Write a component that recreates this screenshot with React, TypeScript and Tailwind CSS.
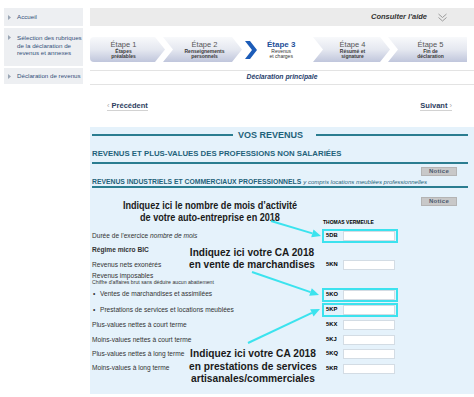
import React from 'react';

type Row = {
  h: string;
  label: React.ReactNode;
  code?: string;
  hl?: boolean;
  kind?: 'bold' | 'tiny' | 'bullet';
};

const rows: Row[] = [
  { h: 'h-[14px]', label: <>Durée de l'exercice <i>nombre de mois</i></>, code: '5DB', hl: true },
  { h: 'h-[14px]', label: 'Régime micro BIC', kind: 'bold' },
  { h: 'h-[16px]', label: 'Revenus nets exonérés', code: '5KN' },
  { h: 'h-[7px]', label: 'Revenus imposables' },
  { h: 'h-[6px]', label: "Chiffre d'affaires brut sans déduire aucun abattement", kind: 'tiny' },
  { h: 'h-[17px]', label: 'Ventes de marchandises et assimilées', code: '5KO', hl: true, kind: 'bullet' },
  { h: 'h-[14px]', label: 'Prestations de services et locations meublées', code: '5KP', hl: true, kind: 'bullet' },
  { h: 'h-[16px]', label: 'Plus-values nettes à court terme', code: '5KX' },
  { h: 'h-[14px]', label: 'Moins-values nettes à court terme', code: '5KJ' },
  { h: 'h-[14px]', label: 'Plus-values nettes à long terme', code: '5KQ' },
  { h: 'h-[15px]', label: 'Moins-values à long terme', code: '5KR' },
];

function Tri() {
  return (
    <svg width="3" height="5" viewBox="0 0 3 5" className="mr-[6px] shrink-0">
      <polygon points="0,0 3,2.5 0,5" fill="#9aa6b5" />
    </svg>
  );
}

function Step({ title, lines, className }: { title: string; lines: string[]; className: string }) {
  return (
    <div
      className={`flex h-[25px] shrink-0 flex-col items-center justify-center bg-linear-to-b from-[#f8f9fb] via-[#e5e8f0] to-[#c0c6dc] ${className}`}
    >
      <span className="text-[7.5px] leading-[8px] text-[#555]">{title}</span>
      {lines.map((l) => (
        <span key={l} className="text-[5px] font-bold leading-[5px] text-[#3a3a3a]">
          {l}
        </span>
      ))}
    </div>
  );
}

function Arrow({ x1, y1, x2, y2 }: { x1: number; y1: number; x2: number; y2: number }) {
  const a = Math.atan2(y2 - y1, x2 - x1);
  const len = 9;
  const half = 4;
  const bx = x2 - len * Math.cos(a);
  const by = y2 - len * Math.sin(a);
  const px = -Math.sin(a) * half;
  const py = Math.cos(a) * half;
  return (
    <g>
      <line x1={x1} y1={y1} x2={bx} y2={by} stroke="#3be3ee" strokeWidth={2} />
      <polygon points={`${x2},${y2} ${bx + px},${by + py} ${bx - px},${by - py}`} fill="#3be3ee" />
    </g>
  );
}

export default function App() {
  return (
    <div className="relative flex h-[397px] w-[474px] overflow-hidden bg-white pt-[8px] font-['Liberation_Sans',Arial,sans-serif]">
      {/* sidebar */}
      <aside className="ml-[4px] flex w-[79px] shrink-0 flex-col gap-[2px] whitespace-nowrap text-[6.2px] leading-[7.5px] text-[#34507a]">
        <div className="flex h-[18px] items-center bg-[#edeff2] pl-[4px]">
          <Tri />
          <span>Accueil</span>
        </div>
        <div className="flex h-[38px] items-start bg-[#edeff2] pl-[4px] pt-[6px]">
          <span className="mt-[1px]">
            <Tri />
          </span>
          <span>
            Sélection des rubriques
            <br />
            de la déclaration de
            <br />
            revenus et annexes
          </span>
        </div>
        <div className="flex h-[16px] items-center bg-[#edeff2] pl-[4px]">
          <Tri />
          <span>Déclaration de revenus</span>
        </div>
      </aside>

      {/* main */}
      <main className="ml-[7px] flex w-[384px] shrink-0 flex-col">
        <div className="flex h-[18px] items-center justify-end bg-[#ebebeb] pr-[27px]">
          <span className="text-[7.5px] font-bold italic text-[#333]">Consulter l'aide</span>
          <svg width="9" height="9" viewBox="0 0 9 9" className="ml-[11px]">
            <polyline points="0.5,1 4.5,4.5 8.5,1" fill="none" stroke="#9a9a9a" strokeWidth="1" />
            <polyline points="0.5,4.5 4.5,8 8.5,4.5" fill="none" stroke="#9a9a9a" strokeWidth="1" />
          </svg>
        </div>

        {/* stepper */}
        <div className="mt-[11px] flex h-[25px]">
          <Step
            title="Étape 1"
            lines={['Étapes', 'préalables']}
            className="w-[75px] rounded-l-[4px] pr-[8px] [clip-path:polygon(0_0,calc(100%_-_10px)_0,100%_50%,calc(100%_-_10px)_100%,0_100%)]"
          />
          <Step
            title="Étape 2"
            lines={['Renseignements', 'personnels']}
            className="-ml-[2px] w-[79px] pl-[4px] [clip-path:polygon(0_0,calc(100%_-_10px)_0,100%_50%,calc(100%_-_10px)_100%,0_100%,10px_50%)]"
          />
          <div className="flex h-[25px] w-[71px] shrink-0 items-center">
            <svg width="12" height="18" viewBox="0 0 12 18" className="ml-[3px]">
              <polygon points="0,0 5,0 12,9 5,18 0,18 7,9" fill="#1c5cb8" />
            </svg>
            <div className="ml-[10px] flex flex-col items-center">
              <span className="text-[8px] font-bold leading-[8px] text-[#1d4f99]">Étape 3</span>
              <span className="text-[5px] leading-[5px] text-[#333]">Revenus</span>
              <span className="text-[5px] leading-[5px] text-[#333]">et charges</span>
            </div>
          </div>
          <Step
            title="Étape 4"
            lines={['Résumé et', 'signature']}
            className="w-[77px] pl-[2px] [clip-path:polygon(0_0,calc(100%_-_10px)_0,100%_50%,calc(100%_-_10px)_100%,0_100%,10px_50%)]"
          />
          <Step
            title="Étape 5"
            lines={['Fin de', 'déclaration']}
            className="-ml-[2px] w-[79px] pl-[6px] [clip-path:polygon(0_0,100%_0,100%_100%,0_100%,10px_50%)]"
          />
        </div>

        <div className="mt-[8px] flex h-[15px] items-center justify-center border-y border-[#e3e3e3]">
          <span className="text-[6.8px] font-bold italic text-[#1f3d6b]">Déclaration principale</span>
        </div>

        <div className="flex h-[42px] items-center justify-between pl-[17px] pr-[22px] text-[7.5px] font-bold text-[#2d4060]">
          <span className="border-b border-[#d2d2d2] leading-[9px]">
            <span className="font-normal text-[#aaa]">‹ </span>Précédent
          </span>
          <span className="border-b border-[#d2d2d2] leading-[9px]">
            Suivant<span className="font-normal text-[#aaa]"> ›</span>
          </span>
        </div>

        {/* panel */}
        <section className="flex flex-col bg-[#e5f2fb] pb-[18px] pl-[2px] pr-[6px]">
          <div className="mt-[3px] flex h-[10px] items-center">
            <div className="h-[1.5px] w-[141px] bg-[#2b7d90]" />
            <span className="ml-[5px] mr-[13px] text-[9px] font-bold leading-none text-[#1f627a]">VOS REVENUS</span>
            <div className="h-[1.5px] flex-1 bg-[#2b7d90]" />
          </div>

          <div className="flex h-[24px] items-end border-b-2 border-[#2b7d90] pb-[4px] text-[7.8px] font-bold leading-[9px] text-[#1f627a]">
            REVENUS ET PLUS-VALUES DES PROFESSIONS NON SALARIÉES
          </div>

          <div className="mr-[11px] mt-[3px] flex h-[9px] w-[36px] items-center justify-center self-end border border-[#b4b4b4] bg-[#c8c8c8] text-[6px] font-bold tracking-[0.3px] text-[#4c5b70]">
            Notice
          </div>

          <div className="flex h-[12px] items-end border-b-2 border-[#2b7d90] leading-[8px] text-[#1f627a]">
            <span className="text-[6.8px] font-bold">REVENUS INDUSTRIELS ET COMMERCIAUX PROFESSIONNELS</span>
            <span className="ml-[2px] text-[6px] italic">y compris locations meublées professionnelles</span>
          </div>

          <div className="mr-[11px] mt-[9px] flex h-[9px] w-[36px] items-center justify-center self-end border border-[#b4b4b4] bg-[#c8c8c8] text-[6px] font-bold tracking-[0.3px] text-[#4c5b70]">
            Notice
          </div>

          <div className="flex h-[23px] items-end pb-[4px]">
            <span className="ml-[231px] text-[5px] font-bold leading-[6px] text-black">THOMAS VERMEULE</span>
          </div>

          {rows.map((r, i) => (
            <div key={i} className={`flex items-center ${r.h}`}>
              <div
                className={`flex w-[230px] shrink-0 items-center whitespace-nowrap leading-none text-[#333] ${
                  r.kind === 'tiny' ? 'text-[5.2px]' : 'text-[6.6px]'
                } ${r.kind === 'bold' ? 'font-bold text-[#222]' : ''}`}
              >
                {r.kind === 'bullet' && <span className="ml-[1px] w-[7px]">•</span>}
                <span>{r.label}</span>
              </div>
              {r.code && (
                <div
                  className={`flex h-[14px] w-[76px] shrink-0 items-center border-2 pl-[2px] ${
                    r.hl ? 'border-[#3ce2ee]' : 'border-transparent'
                  }`}
                >
                  <span className="w-[17px] text-[5.8px] font-bold leading-none text-black">{r.code}</span>
                  <span className="h-[10px] w-[52px] border border-[#d3dce4] bg-white" />
                </div>
              )}
            </div>
          ))}
        </section>
      </main>

      {/* annotations drawn over the screenshot */}
      <div className="pointer-events-none absolute left-[60px] top-[199px] w-[300px] scale-x-[0.79] whitespace-nowrap text-center text-[11.5px] font-bold leading-[12px] text-[#1a1a1a]">
        Indiquez ici le nombre de mois d’activité
        <br />
        de votre auto-entreprise en 2018
      </div>
      <div className="pointer-events-none absolute left-[102px] top-[246px] w-[300px] scale-x-[0.875] whitespace-nowrap text-center text-[11.5px] font-bold leading-[12px] text-[#1a1a1a]">
        Indiquez ici votre CA 2018
        <br />
        en vente de marchandises
      </div>
      <div className="pointer-events-none absolute left-[103px] top-[347px] w-[300px] scale-x-[0.885] whitespace-nowrap text-center text-[11.5px] font-bold leading-[12.5px] text-[#1a1a1a]">
        Indiquez ici votre CA 2018
        <br />
        en prestations de services
        <br />
        artisanales/commerciales
      </div>
      <svg className="pointer-events-none absolute left-0 top-0" width="474" height="397" viewBox="0 0 474 397">
        <Arrow x1={271} y1={221} x2={321} y2={236} />
        <Arrow x1={252} y1={272} x2={319} y2={295} />
        <Arrow x1={248} y1={343} x2={320} y2={309} />
      </svg>
    </div>
  );
}
